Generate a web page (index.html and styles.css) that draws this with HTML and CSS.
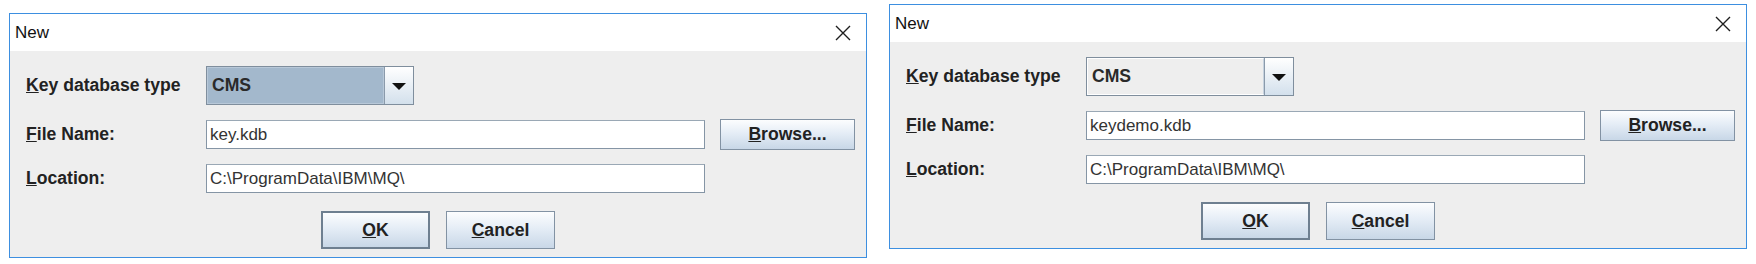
FILE: index.html
```html
<!DOCTYPE html>
<html lang="en">
<head>
    <meta charset="UTF-8">
    <title>New Key Database</title>
    <link rel="stylesheet" href="styles.css">
</head>
<body>

<div class="screen">
    <div class="dialog first">
        <div class="titlebar">
            <span class="title">New</span>
            <svg class="close" width="16" height="16" viewBox="0 0 16 16">
                <path d="M1 1 L15 15 M15 1 L1 15" stroke="#1e1e1e" stroke-width="1.4" fill="none"/>
            </svg>
        </div>
        <div class="content">
            <div class="row">
                <label class="label"><u>K</u>ey database type</label>
                <div class="combo selected">
                    <span class="combo-text">CMS</span>
                    <span class="combo-arrow"><span class="triangle"></span></span>
                </div>
            </div>
            <div class="row">
                <label class="label"><u>F</u>ile Name:</label>
                <div class="field">key.kdb</div>
                <button class="btn browse"><u>B</u>rowse...</button>
            </div>
            <div class="row">
                <label class="label"><u>L</u>ocation:</label>
                <div class="field">C:\ProgramData\IBM\MQ\</div>
            </div>
            <div class="actions">
                <button class="btn big default"><u>O</u>K</button>
                <button class="btn big"><u>C</u>ancel</button>
            </div>
        </div>
    </div>

    <div class="dialog second">
        <div class="titlebar">
            <span class="title">New</span>
            <svg class="close" width="16" height="16" viewBox="0 0 16 16">
                <path d="M1 1 L15 15 M15 1 L1 15" stroke="#1e1e1e" stroke-width="1.4" fill="none"/>
            </svg>
        </div>
        <div class="content">
            <div class="row">
                <label class="label"><u>K</u>ey database type</label>
                <div class="combo">
                    <span class="combo-text">CMS</span>
                    <span class="combo-arrow"><span class="triangle"></span></span>
                </div>
            </div>
            <div class="row">
                <label class="label"><u>F</u>ile Name:</label>
                <div class="field">keydemo.kdb</div>
                <button class="btn browse"><u>B</u>rowse...</button>
            </div>
            <div class="row">
                <label class="label"><u>L</u>ocation:</label>
                <div class="field">C:\ProgramData\IBM\MQ\</div>
            </div>
            <div class="actions">
                <button class="btn big default"><u>O</u>K</button>
                <button class="btn big"><u>C</u>ancel</button>
            </div>
        </div>
    </div>
</div>

</body>
</html>
```

FILE: styles.css
```css
body {
    margin: 0;
    background-color: #ffffff;
    font-family: 'Liberation Sans', Arial, sans-serif;
    color: #222;
}

.screen {
    display: flex;
    align-items: flex-start;
    gap: 22px;
    padding-left: 9px;
}

.dialog {
    box-sizing: border-box;
    width: 858px;
    height: 245px;
    border: 1px solid #3d8fe0;
    background-color: #eeeeee;
    display: flex;
    flex-direction: column;
}

.dialog.first {
    margin-top: 13px;
}

.dialog.second {
    margin-top: 4px;
}

.titlebar {
    height: 37px;
    background-color: #ffffff;
    display: flex;
    align-items: center;
    justify-content: space-between;
    padding: 0 15px 0 5px;
}

.title {
    font-size: 17px;
    color: #111;
}

.close {
    display: block;
}

.content {
    display: flex;
    flex-direction: column;
    padding: 15px 0 0 16px;
}

.row {
    display: flex;
    align-items: center;
    margin-bottom: 14px;
}

.label {
    width: 180px;
    font-size: 17.6px;
    font-weight: bold;
    color: #222;
}

/* combo box */
.combo {
    box-sizing: border-box;
    width: 208px;
    height: 39px;
    border: 1px solid #7f8e9d;
    display: flex;
    background-color: #eeeeee;
}

.combo-text {
    flex: 1;
    font-size: 17.6px;
    font-weight: bold;
    color: #2a2a2a;
    padding: 0 4px;
    display: flex;
    align-items: center;
    border: 1px solid #ffffff;
    border-right-color: #c6d2de;
}

.combo.selected .combo-text {
    background-color: #a3b8cc;
    border-color: #b8c8d8;
}

.combo-arrow {
    width: 28px;
    border-left: 1px solid #8a9aab;
    background: linear-gradient(#ffffff, #d3e0ec);
    display: flex;
    align-items: center;
    justify-content: center;
}

.triangle {
    width: 0;
    height: 0;
    border-left: 7px solid transparent;
    border-right: 7px solid transparent;
    border-top: 7px solid #111;
    margin-top: 2px;
}

/* text fields */
.field {
    box-sizing: border-box;
    width: 499px;
    height: 29px;
    border: 1px solid #8595a5;
    border-top-color: #9aa8b5;
    background-color: #ffffff;
    font-size: 17px;
    color: #333;
    padding: 0 3px;
    display: flex;
    align-items: center;
}

/* buttons */
.btn {
    box-sizing: border-box;
    font-family: 'Liberation Sans', Arial, sans-serif;
    font-size: 17.6px;
    font-weight: bold;
    color: #222;
    border: 1px solid #8292a3;
    background: linear-gradient(#fcfdfe, #e5edf6 45%, #c8d7e7);
    padding: 0;
    cursor: pointer;
}

.btn.browse {
    width: 135px;
    height: 31px;
    margin-left: 15px;
}

.actions {
    display: flex;
    justify-content: center;
    gap: 16px;
    margin-top: 4px;
    margin-left: -16px;
}

.btn.big {
    width: 109px;
    height: 38px;
}

.btn.default {
    border: 2px solid #6e7f90;
}
```
